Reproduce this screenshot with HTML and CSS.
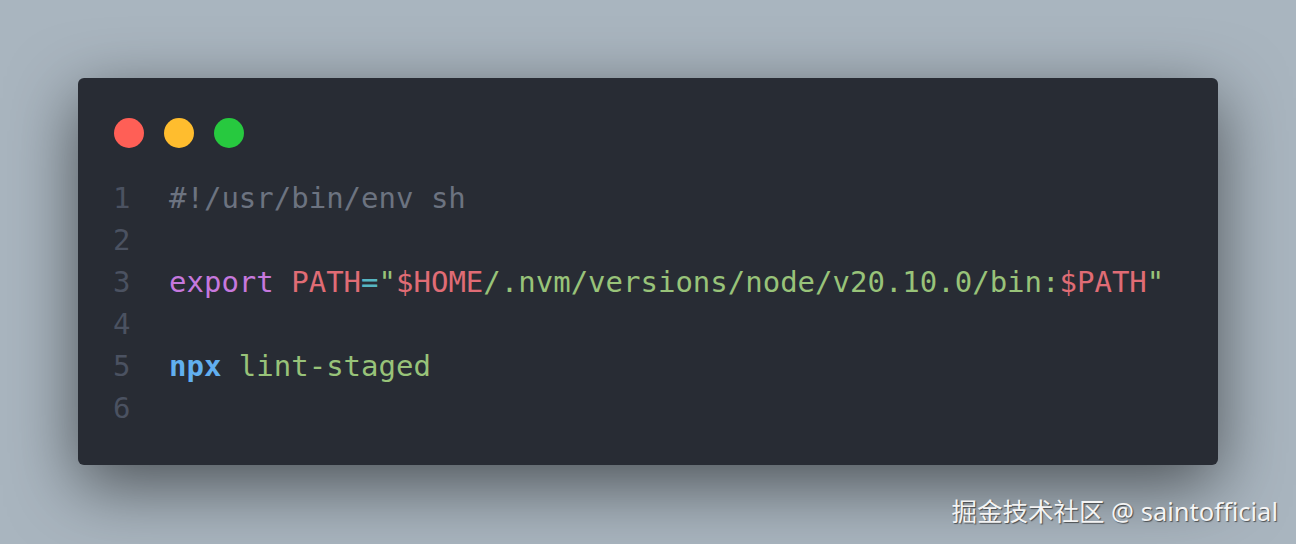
FILE: index.html
```html
<!DOCTYPE html>
<html lang="en">
<head>
<meta charset="utf-8">
<title>Code snippet</title>
<link rel="stylesheet" href="styles.css">
</head>
<body>
<main class="stage">
  <section class="window">
    <div class="controls">
      <span class="dot dot-red"></span>
      <span class="dot dot-yellow"></span>
      <span class="dot dot-green"></span>
    </div>
    <div class="code">
      <div class="line"><span class="ln">1</span><span class="src"><span class="c-meta">#!/usr/bin/env sh</span></span></div>
      <div class="line"><span class="ln">2</span><span class="src"></span></div>
      <div class="line"><span class="ln">3</span><span class="src"><span class="c-kw">export</span> <span class="c-var">PATH</span><span class="c-op">=</span><span class="c-str">"</span><span class="c-var">$HOME</span><span class="c-str">/.nvm/versions/node/v20.10.0/bin:</span><span class="c-var">$PATH</span><span class="c-str">"</span></span></div>
      <div class="line"><span class="ln">4</span><span class="src"></span></div>
      <div class="line"><span class="ln">5</span><span class="src"><span class="c-cmd">npx</span> <span class="c-str">lint-staged</span></span></div>
      <div class="line"><span class="ln">6</span><span class="src"></span></div>
    </div>
  </section>
  <p class="watermark">掘金技术社区 @ saintofficial</p>
</main>
</body>
</html>
```
FILE: styles.css
```css
html, body {
  margin: 0;
  padding: 0;
}
body {
  width: 1296px;
  height: 544px;
  overflow: hidden;
  background: #a9b5bf;
}
.stage {
  position: relative;
  box-sizing: border-box;
  width: 1296px;
  height: 544px;
  padding: 78px 78px 0 78px;
}
.window {
  box-sizing: border-box;
  width: 1140px;
  height: 387px;
  background: #282c34;
  border-radius: 6px;
  box-shadow: 0 20px 68px rgba(0, 0, 0, 0.55);
  padding: 40px 36px 36px 35px;
}
.controls {
  display: flex;
  gap: 20px;
  height: 30px;
  padding-left: 1px;
}
.dot {
  width: 30px;
  height: 30px;
  border-radius: 50%;
}
.dot-red { background: #ff5f56; }
.dot-yellow { background: #ffbd2e; }
.dot-green { background: #27c93f; }
.code {
  margin-top: 29px;
  font-family: "DejaVu Sans Mono", "Liberation Mono", monospace;
  font-size: 29px;
  line-height: 42px;
  color: #abb2bf;
}
.line {
  display: flex;
  height: 42px;
  white-space: pre;
}
.ln {
  width: 56px;
  flex: none;
  color: #4b5261;
}
.src { flex: 1; }
.c-meta { color: #6c7380; }
.c-kw { color: #c678dd; }
.c-var { color: #e06c75; }
.c-op { color: #56b6c2; }
.c-str { color: #98c379; }
.c-cmd { color: #61afef; font-weight: bold; }
.watermark {
  position: absolute;
  right: 18px;
  top: 492px;
  margin: 0;
  font-family: "Noto Sans", "Noto Sans CJK SC", sans-serif;
  font-size: 25.5px;
  line-height: 38px;
  color: #f4f4f4;
  text-shadow: 1px 1px 1px rgba(40, 40, 40, 0.7);
}
```
